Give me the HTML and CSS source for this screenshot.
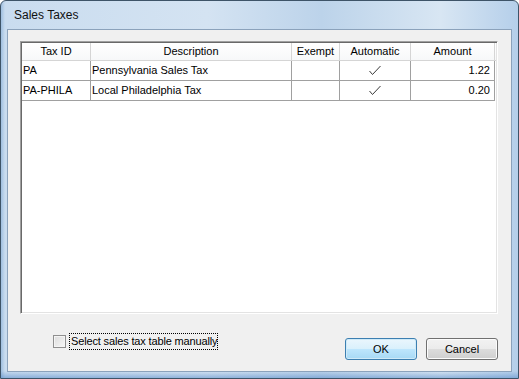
FILE: index.html
```html
<!DOCTYPE html>
<html>
<head>
<meta charset="utf-8">
<link rel="stylesheet" href="styles.css">
</head>
<body>
<div class="window">
  <div class="titlebar"><span class="title">Sales Taxes</span></div>
  <div class="client">
    <div class="listview">
      <div class="row header">
        <div class="c c1">Tax ID</div>
        <div class="c c2">Description</div>
        <div class="c c3">Exempt</div>
        <div class="c c4">Automatic</div>
        <div class="c c5">Amount</div>
      </div>
      <div class="row item">
        <div class="c c1">PA</div>
        <div class="c c2">Pennsylvania Sales Tax</div>
        <div class="c c3"></div>
        <div class="c c4"><svg width="14" height="11" viewBox="0 0 14 11"><polyline points="1.5,6 4.5,9.5 12.5,1" fill="none" stroke="#3a3a3a" stroke-width="1"/></svg></div>
        <div class="c c5">1.22</div>
      </div>
      <div class="row item">
        <div class="c c1">PA-PHILA</div>
        <div class="c c2">Local Philadelphia Tax</div>
        <div class="c c3"></div>
        <div class="c c4"><svg width="14" height="11" viewBox="0 0 14 11"><polyline points="1.5,6 4.5,9.5 12.5,1" fill="none" stroke="#3a3a3a" stroke-width="1"/></svg></div>
        <div class="c c5">0.20</div>
      </div>
    </div>
    <div class="bottom">
      <label class="check">
        <span class="box"></span>
        <span class="label">Select sales tax table manually</span>
      </label>
      <div class="buttons">
        <button class="btn default">OK</button>
        <button class="btn">Cancel</button>
      </div>
    </div>
  </div>
</div>
</body>
</html>
```

FILE: styles.css
```css
html, body {
  margin: 0;
  padding: 0;
  background: #ffffff;
}
body {
  font-family: "Liberation Sans", Arial, sans-serif;
  font-size: 11px;
  color: #000;
}
.window {
  width: 519px;
  height: 379px;
  box-sizing: border-box;
  border: 1px solid #3e5468;
  border-radius: 6px 6px 0 0;
  padding: 0 6px 6px 6px;
  background:
    linear-gradient(to bottom, rgba(90, 140, 200, 0) 0, rgba(90, 140, 200, 0) 370px, rgba(90, 140, 200, 0.55) 377px),
    linear-gradient(to right, #9fbfe0 0px, #c9dcef 4px, #d4e3f2 40%, #bcd3ea 62%, #d8e6f3 85%, #b5cfea 100%);
  display: flex;
  flex-direction: column;
}
.titlebar {
  height: 28px;
  display: flex;
  align-items: center;
  padding-left: 7px;
  padding-bottom: 1px;
  box-sizing: border-box;
}
.title {
  font-size: 12px;
  color: #101010;
}
.client {
  flex: 1;
  border: 1px solid #8ba2bb;
  background: #f0f0f0;
  padding: 11px 13px 0 12px;
  display: flex;
  flex-direction: column;
}
.listview {
  height: 273px;
  box-sizing: border-box;
  border: 1px solid;
  border-color: #a0a0a0 #ffffff #ffffff #a0a0a0;
  box-shadow: inset 1px 1px 0 #696969, inset -1px -1px 0 #e3e3e3;
  background: #fff;
  padding: 1px;
}
.row {
  display: flex;
}
.header {
  height: 17px;
  border-bottom: 1px solid #d5d5d5;
  background: linear-gradient(#ffffff, #f7f8f9);
}
.header .c {
  text-align: center;
  border-right: 1px solid #d5d5d5;
  line-height: 17px;
}
.item {
  height: 20px;
}
.item .c {
  border-right: 1px solid #a0a0a0;
  border-bottom: 1px solid #a0a0a0;
  line-height: 19px;
  padding-left: 1px;
}
.c {
  box-sizing: border-box;
  white-space: nowrap;
  overflow: hidden;
}
.c1 { width: 69px; }
.c2 { width: 201px; }
.c3 { width: 48px; }
.c4 { width: 71px; }
.c5 { width: 84px; }
.item .c4 {
  display: flex;
  align-items: center;
  justify-content: center;
  padding-left: 0;
}
.item .c5 {
  text-align: right;
  padding-right: 4px;
}
.bottom {
  display: flex;
  justify-content: space-between;
  align-items: flex-start;
}
.check {
  display: flex;
  align-items: center;
  margin-top: 19px;
  margin-left: 33px;
}
.box {
  width: 11px;
  height: 11px;
  border: 1px solid #8f8f8f;
  background: linear-gradient(135deg, #dcdcdc, #f7f7f7);
  box-shadow: inset 0 0 0 1px #f4f4f4;
  margin-right: 3px;
}
.label {
  border: 1px dotted #000;
  padding: 0 0 1px 1px;
  line-height: 14px;
  font-size: 11px;
  letter-spacing: -0.15px;
}
.buttons {
  display: flex;
  gap: 9px;
  margin-top: 24px;
}
.btn {
  width: 72px;
  height: 22px;
  box-sizing: border-box;
  font-family: "Liberation Sans", Arial, sans-serif;
  font-size: 11px;
  color: #000;
  border: 1px solid #707070;
  border-radius: 3px;
  background: linear-gradient(#f2f2f2 0%, #ebebeb 50%, #dddddd 50%, #cfcfcf 100%);
  box-shadow: inset 0 0 0 1px #fcfcfc;
  padding: 0;
}
.btn.default {
  border-color: #3c7fb1;
  background: linear-gradient(#eaf6fd 0%, #d9f0fc 50%, #bee6fd 50%, #a7d9f5 100%);
  box-shadow: inset 0 0 0 1px #cfeaf8;
}
```
